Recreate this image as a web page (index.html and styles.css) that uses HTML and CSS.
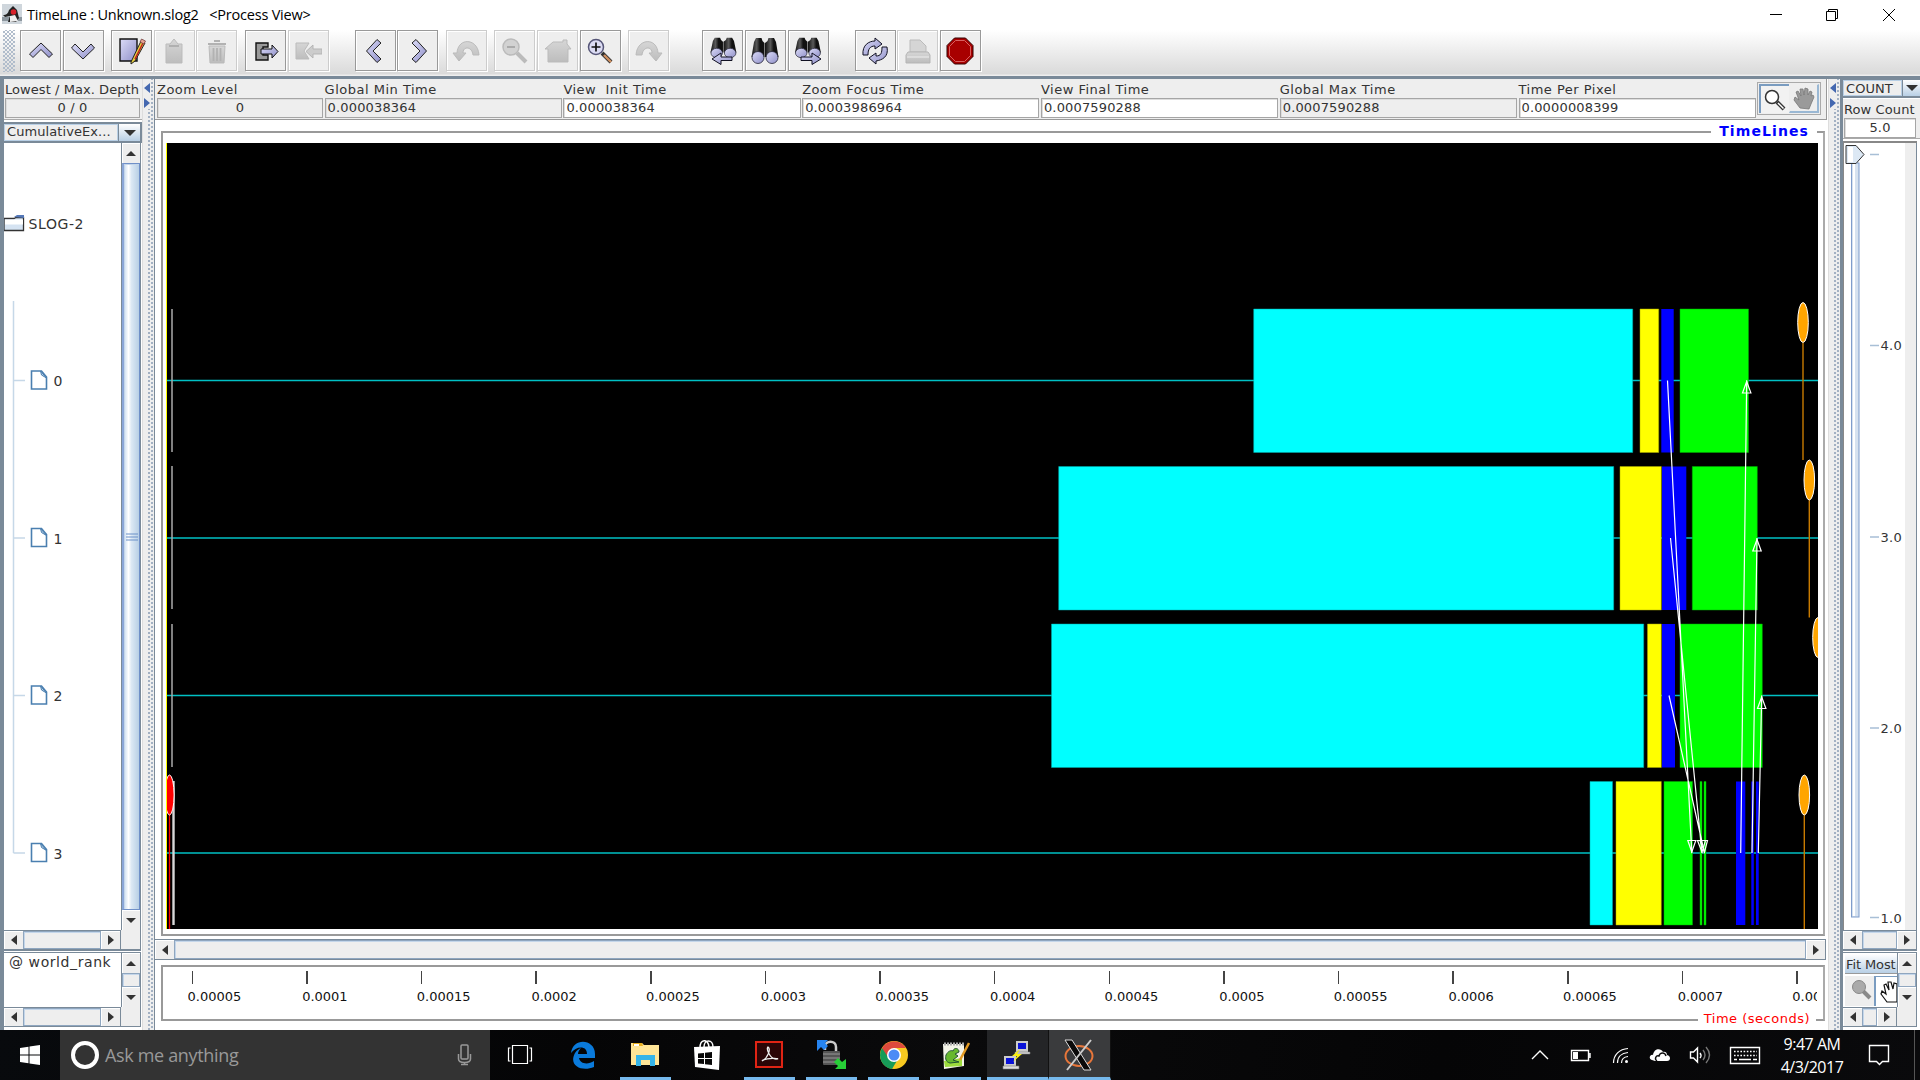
FILE: index.html
```html
<!DOCTYPE html>
<html lang="en">
<head>
<meta charset="utf-8">
<title>TimeLine : Unknown.slog2</title>
<link rel="stylesheet" href="styles.css">
</head>
<body>
<svg width="0" height="0" class="defs">
  <defs>
    <linearGradient id="lav" x1="0" y1="0" x2="1" y2="1"><stop offset="0" stop-color="#dcdcf8"/><stop offset="1" stop-color="#8f8fc8"/></linearGradient>
    <linearGradient id="gry" x1="0" y1="0" x2="0" y2="1"><stop offset="0" stop-color="#d6d6d6"/><stop offset="1" stop-color="#bdbdbd"/></linearGradient>
    <linearGradient id="barrel" x1="0" x2="1"><stop offset="0" stop-color="#111"/><stop offset=".4" stop-color="#5a5a5a"/><stop offset=".65" stop-color="#111"/></linearGradient>
    <g id="bino"><path d="M5 1h5.500l1 3 2 2v14H.500L3 5z" fill="url(#barrel)"/><path d="M17.500 1H23l2 4 2.500 15H14V6l2.500-2z" fill="url(#barrel)"/><circle cx="7" cy="20.500" r="6" fill="url(#lav)" stroke="#223" stroke-width=".8"/><circle cx="21" cy="20.500" r="6" fill="url(#lav)" stroke="#223" stroke-width=".8"/></g>
    <g id="doc"><path d="M1 1h10l5 6v12H1z" fill="#fff" stroke="#4a7fb0" stroke-width="1.600"/><path d="M10 1l6 7-5-3z" fill="#b8cfe5" stroke="#4a7fb0"/></g>
  </defs>
</svg>

<header class="titlebar">
  <svg class="app-icon" width="20" height="20" viewBox="0 0 20 20"><rect width="20" height="20" fill="#cfd6dc"/><path d="M0 13h20v4H0z" fill="#8d979f"/><path d="M1 11c3 0 5-1 6-5l4-4 4 4 2 8-3 4H6l2-6-5 1z" fill="#222"/><path d="M8 12l5-1 3 6-8 1z" fill="#eee"/><circle cx="11.500" cy="8" r="2.800" fill="#d8202a"/></svg>
  <span class="caption">TimeLine : Unknown.slog2 &nbsp;&nbsp;&lt;Process View&gt;</span>
  <svg class="winctl" width="130" height="16" viewBox="0 0 130 16" fill="none" stroke="#000"><path d="M0 8.500h12"/><path d="M56.500 5.500h9v9h-9zM58.500 5.500v-2h9v9h-2"/><path d="M113 3l12 12M125 3l-12 12"/></svg>
</header>

<nav class="toolbar">
  <i class="grip"></i>
  <button class="tb"><svg viewBox="0 0 28 28"><path d="M2.500 17L14 6l11.500 11-3.500 3.500-8-8-8 8z" fill="url(#lav)" stroke="#222"/></svg></button>
  <button class="tb"><svg viewBox="0 0 28 28"><path d="M2.500 11L14 22l11.500-11L22 7l-8 8-8-8z" fill="url(#lav)" stroke="#222"/></svg></button>
  <button class="tb g7"><svg viewBox="0 0 28 28"><path d="M2 2h17v22H2z" fill="url(#lav)" stroke="#111" stroke-width="1.400"/><path d="M13 25L23 4l4 2-10 18-4 3z" fill="#e8d040" stroke="#222"/><path d="M17 22L25 6" stroke="#c02020" stroke-width="1.500"/><path d="M22 5l1.500-3 4 2L26 7z" fill="#e8a090" stroke="#633" stroke-width=".7"/></svg></button>
  <button class="tb off"><svg viewBox="0 0 28 28"><path d="M6 7h4l4-5 4 5h4v19H6z" fill="url(#gry)" stroke="#bbb"/><path d="M9 9h10" stroke="#b0b0b0" stroke-width="2"/></svg></button>
  <button class="tb off"><svg viewBox="0 0 28 28"><path d="M6 9h16l-1 17H7z" fill="url(#gry)" stroke="#bbb"/><path d="M5 7h18M11 4h6M10.500 11v13M14 11v13M17.500 11v13" stroke="#b2b2b2" stroke-width="1.800"/></svg></button>
  <button class="tb g7"><svg viewBox="0 0 28 28"><path d="M5 6h12v4h-5v8h5v5H5z" fill="#999" stroke="#111" stroke-width="1.400"/><path d="M10 12h11V8l6 6.500-6 6.500v-4H10z" fill="url(#lav)" stroke="#111"/></svg></button>
  <button class="tb off"><svg viewBox="0 0 28 28"><path d="M2 6h13l-5 8 5 8H2z" fill="url(#gry)" stroke="#bbb"/><path d="M28 12h-9V8l-7 6.500 7 6.500v-4h9z" fill="#ccc" stroke="#b5b5b5"/></svg></button>
  <button class="tb g26"><svg viewBox="0 0 28 28"><path d="M16 2.500L5.500 14 16 25.500l4-3.500-8-8 8-8z" fill="url(#lav)" stroke="#222"/></svg></button>
  <button class="tb"><svg viewBox="0 0 28 28"><path d="M12 2.500L22.500 14 12 25.500 8 22l8-8-8-8z" fill="url(#lav)" stroke="#222"/></svg></button>
  <button class="tb off g7"><svg viewBox="0 0 28 28"><path d="M1 16l6 8 7-8h-3c0-7 9-7 10 2h6C26 1 6 0 5 16z" fill="url(#gry)" stroke="#bbb"/></svg></button>
  <button class="tb off g7"><svg viewBox="0 0 28 28"><path d="M16 16l9 9" stroke="#bbb" stroke-width="4"/><circle cx="10" cy="10" r="8" fill="#d2d2d2" stroke="#bbb" stroke-width="1.500"/><path d="M6 10h8" stroke="#aaa" stroke-width="2"/></svg></button>
  <button class="tb off"><svg viewBox="0 0 28 28"><path d="M1 12L9 5h10V3h4v4l4 5h-3v13H4V12z" fill="url(#gry)" stroke="#bbb"/></svg></button>
  <button class="tb"><svg viewBox="0 0 28 28"><path d="M16 16l9 9" stroke="#333" stroke-width="4"/><path d="M18 18l7 7" stroke="#d09060" stroke-width="2.400"/><circle cx="10" cy="10" r="7.500" fill="#dcdcf4" stroke="#555577" stroke-width="1.500"/><path d="M5.500 10h9M10 5.500v9" stroke="#111" stroke-width="1.700"/></svg></button>
  <button class="tb off g7"><svg viewBox="0 0 28 28"><path d="M27 16l-6 8-7-8h3c0-7-9-7-10 2H1C2 1 22 0 23 16z" fill="url(#gry)" stroke="#bbb"/></svg></button>
  <button class="tb g33"><svg viewBox="0 0 28 28"><use href="#bino" transform="translate(1 0) scale(.96 .78)"/><path d="M23 20H12v-4l-9 6 9 5.500v-4h11z" fill="url(#lav)" stroke="#112"/></svg></button>
  <button class="tb"><svg viewBox="0 0 28 28"><use href="#bino"/></svg></button>
  <button class="tb"><svg viewBox="0 0 28 28"><use href="#bino" transform="translate(.5 0) scale(.96 .78)"/><path d="M7 20h11v-4l9 6-9 5.500v-4H7z" fill="url(#lav)" stroke="#112"/></svg></button>
  <button class="tb g26"><svg viewBox="0 0 28 28" fill="url(#lav)" stroke="#112"><path d="M2 18C1 8 8 4 14 4V1l7 6-7 5V9c-5 0-7 3-7 9z"/><path d="M26 10c2 10-5 13-11 14v3l-7-6 7-5v3c5 0 6-3 6-9z"/></svg></button>
  <button class="tb off"><svg viewBox="0 0 28 28"><path d="M6 15V3h10l6 6v6z" fill="#d5d5d5" stroke="#bbb"/><path d="M4 15h20l2 3v8H2v-8z" fill="url(#gry)" stroke="#b5b5b5"/><path d="M3 20h22" stroke="#eee"/></svg></button>
  <button class="tb"><svg viewBox="0 0 28 28"><path d="M8.500 1h11L27 8.500v11L19.500 27h-11L1 19.500v-11z" fill="#a80000" stroke="#300"/><path d="M9.500 3.500h9l6 6v9l-6 6h-9l-6-6v-9z" fill="none" stroke="#d86060"/></svg></button>
</nav>

<main class="work">
  <aside class="left">
    <section class="depth"><label>Lowest / Max. Depth</label><output class="ro mid">0 / 0</output></section>
    <div class="combo"><span>CumulativeEx...</span><b><i class="ar dn big"></i></b></div>
    <section class="pane tree-pane">
      <div class="tree">
        <svg width="118" height="787" viewBox="4 143 118 787">
          <path d="M13.500 301v552M13.500 380.500H25M13.500 538H25M13.500 695.500H25M13.500 853H25" stroke="#c6d8e8" stroke-width="1.500" fill="none"/>
          <path d="M4 218.500h10l2-1h7.500v13H4z" fill="#d5e3f2" stroke="#333" stroke-width="1.300"/><path d="M5 219.500h18v5H5z" fill="#fff"/><path d="M14 217l3-2h7v3z" fill="#5478b8"/>
          <use href="#doc" x="30.500" y="370"/><use href="#doc" x="30.500" y="527.500"/><use href="#doc" x="30.500" y="685"/><use href="#doc" x="30.500" y="842.500"/>
          <g class="tree-text"><text x="28.500" y="229">SLOG-2</text><text x="53.500" y="386">0</text><text x="53.500" y="543.500">1</text><text x="53.500" y="701">2</text><text x="53.500" y="858.500">3</text></g>
        </svg>
      </div>
      <div class="vs"><b><i class="ar up"></i></b><em class="thumb"><svg width="12" height="8"><path d="M0 1h12M0 4h12M0 7h12" stroke="#6a90c8"/></svg></em><b><i class="ar dn"></i></b></div>
      <div class="hs"><b><i class="ar lf"></i></b><em></em><b><i class="ar rt"></i></b></div>
      <span class="corner"></span>
    </section>
    <section class="pane rank-pane">
      <div class="rank">@ world_rank</div>
      <div class="vs"><b><i class="ar up"></i></b><em></em><b><i class="ar dn"></i></b></div>
      <div class="hs"><b><i class="ar lf"></i></b><em></em><b><i class="ar rt"></i></b></div>
      <span class="corner"></span>
    </section>
  </aside>

  <div class="split"><svg width="6" height="30"><path d="M6 4v10L0 9zM0 19v10l6-5z" fill="#4468b0"/></svg></div>

  <section class="center">
    <div class="times">
      <div class="f f0"><label>Zoom Level</label><output class="ro mid">0</output></div>
      <div class="f"><label>Global Min Time</label><output class="ro">0.000038364</output></div>
      <div class="f"><label>View &nbsp;Init Time</label><output>0.000038364</output></div>
      <div class="f"><label>Zoom Focus Time</label><output>0.0003986964</output></div>
      <div class="f"><label>View Final Time</label><output>0.0007590288</output></div>
      <div class="f"><label>Global Max Time</label><output class="ro">0.0007590288</output></div>
      <div class="f"><label>Time Per Pixel</label><output>0.0000008399</output></div>
      <div class="modes">
        <b class="sel"><svg width="24" height="24" viewBox="0 0 24 24"><path d="M14 14l7 7" stroke="#333" stroke-width="4"/><path d="M15 15l5.500 5.500" stroke="#fff" stroke-width="1.500"/><circle cx="9" cy="9" r="6.500" fill="#fff" stroke="#333" stroke-width="1.500"/></svg></b>
        <b><svg width="24" height="24" viewBox="0 0 24 24"><path d="M8 22L2 14l1-3 4 3L4 6l2-1 3 5-1-7h3l1 6 1-7 3 1v6l2-4 2 1-1 4 2-1 1 2-3 7-2 5z" fill="#9a9a9a" stroke="#777" stroke-width=".8"/></svg></b>
      </div>
    </div>
    <fieldset class="lines"><legend>TimeLines</legend>
      <svg class="canvas" width="1652" height="786" viewBox="166 143 1652 786">
        <rect x="166" y="143" width="1652" height="786" fill="#000"/>
        <path d="M166 380.500h1652M166 538h1652M166 695.500h1652M166 853h1652" stroke="#00c0c4" stroke-width="1.300"/>
        <path d="M172 309v143M172 466v143M172 624v143" stroke="#aaa" stroke-width="1.500"/>
        <path d="M173.500 781v144" stroke="#d8d8d8" stroke-width="2.400"/>
        <g fill="#0ff" stroke="#0aa" stroke-width=".5"><path d="M1253.700 309h379v143.500h-379zM1058.700 466.500h555v143.500h-555zM1051.500 624h592.200v143.500h-592.200zM1590 781.500h22.500v143.500H1590z"/></g>
        <g fill="#ff0" stroke="#aa0" stroke-width=".5"><path d="M1640 309h18.700v143.500H1640zM1620 466.500h41.300v143.500H1620zM1647.500 624h13.800v143.500h-13.800zM1616 781.500h45.300v143.500H1616z"/></g>
        <g fill="#00f"><path d="M1661.300 309h12.400v143.500h-12.400zM1662 466.500h24.300v143.500H1662zM1662 624h13v143.500h-13zM1736 781.500h9.300v143.500H1736zM1751.300 781.500h2.500v143.500h-2.500zM1756 781.500h2.700v143.500H1756z"/></g>
        <g fill="#0f0" stroke="#0a0" stroke-width=".5"><path d="M1680 309h68.500v143.500H1680zM1692.300 466.500h65v143.500h-65zM1680 624h82.300v143.500H1680zM1664 781.500h28.500v143.500H1664zM1700 781.500h2v143.500h-2zM1704 781.500h2v143.500h-2z"/></g>
        <g stroke="#c87a00" stroke-width="1.400"><path d="M1803 343v117M1809.300 500v117.500M1804.300 815v114"/></g>
        <g fill="#ffa500" stroke="#fff" stroke-width="1"><ellipse cx="1803" cy="322.500" rx="5.300" ry="20"/><ellipse cx="1809.300" cy="480" rx="5.300" ry="20"/><ellipse cx="1818" cy="637.500" rx="5.300" ry="20"/><ellipse cx="1804.300" cy="795" rx="5.300" ry="20"/></g>
        <path d="M169.500 815v114" stroke="#f00" stroke-width="1.300"/><ellipse cx="169.500" cy="795" rx="4.600" ry="20" fill="#f00" stroke="#fff"/>
        <g stroke="#fff" stroke-width="1.200" fill="none">
          <path d="M1667.500 380.500L1691.800 853M1670.500 538L1702 853M1669 695.500L1704.500 853M1740.700 853L1746.700 380.500M1752 853L1757 538M1758.300 853L1761.700 695.500"/>
          <path d="M1746.700 381.500l-4.200 11.500h8.400zM1757 539.500l-4.200 11.500h8.400zM1761.700 697l-4.200 11.500h8.400zM1691.800 852l-4-11.500h8zM1702 852l-4.500-11.500h8zM1704.500 852l-4.500-11.500h7.500z"/>
        </g>
        <path d="M166.500 143v786" stroke="#ff0"/>
      </svg>
    </fieldset>
    <div class="hs wide"><b><i class="ar lf"></i></b><em></em><b><i class="ar rt"></i></b></div>
    <div class="ruler">
      <div class="ticks"><span>0.00005</span><span>0.0001</span><span>0.00015</span><span>0.0002</span><span>0.00025</span><span>0.0003</span><span>0.00035</span><span>0.0004</span><span>0.00045</span><span>0.0005</span><span>0.00055</span><span>0.0006</span><span>0.00065</span><span>0.0007</span><span>0.00075</span></div>
      <div class="unit">Time (seconds)</div>
    </div>
  </section>

  <div class="split right-split"><svg width="6" height="30"><path d="M6 4v10L0 9zM0 19v10l6-5z" fill="#4468b0"/></svg></div>

  <aside class="right">
    <div class="combo"><span>COUNT</span><b><i class="ar dn big"></i></b></div>
    <section class="rowcount"><label>Row Count</label><output class="mid">5.0</output></section>
    <section class="slider-pane">
      <div class="slider">
        <svg width="61" height="787" viewBox="1844 143 61 787">
          <rect x="1851.500" y="163" width="7.500" height="754" fill="#d6e2f0" stroke="#7f9ccb"/><path d="M1854 163v753" stroke="#fff" stroke-width="2"/>
          <path d="M1846 145.500h10l8 9-8 9h-10z" fill="#dce8f4" stroke="#333"/><path d="M1848 147h5v15h-5z" fill="#fff"/>
          <path d="M1870 154.500h9M1870 345.500h9M1870 537h9M1870 728h9M1870 917.500h9" stroke="#a8bfd6" stroke-width="1.300"/>
          <g class="num"><text x="1880.500" y="350">4.0</text><text x="1880.500" y="541.500">3.0</text><text x="1880.500" y="732.500">2.0</text><text x="1880.500" y="922.500">1.0</text></g>
        </svg>
      </div>
      <div class="hs"><b><i class="ar lf"></i></b><em></em><b><i class="ar rt"></i></b></div>
    </section>
    <section class="pane fit-pane">
      <div class="fit"><div class="fitbtn">Fit Most</div>
        <div class="fitmodes"><b><svg width="24" height="24" viewBox="0 0 24 24"><path d="M13 13l7 7" stroke="#8a8a8a" stroke-width="4"/><circle cx="9" cy="9" r="6.500" fill="#aaa" stroke="#888"/></svg></b><b class="sel"><svg width="19" height="24" viewBox="0 0 19 24"><path d="M8 23L2 15l1-3 4 3-2-9 2-1 3 6-1-8h3l2 7 1-6 3 1v18z" fill="#fff" stroke="#111" stroke-width="1.200"/></svg></b></div></div>
      <div class="vs"><b><i class="ar up"></i></b><em></em><b><i class="ar dn"></i></b></div>
      <div class="hs"><b><i class="ar lf"></i></b><em></em><b><i class="ar rt"></i></b></div>
      <span class="corner"></span>
    </section>
  </aside>
</main>

<footer class="taskbar">
  <div class="start"><svg width="20" height="20" viewBox="0 0 20 20" fill="#fff"><path d="M0 3l8.500-1.300v7.800H0zM9.500 1.500L20 0v9.500H9.500zM0 10.500h8.500v7.800L0 17zM9.500 10.500H20V20L9.500 18.500z"/></svg></div>
  <div class="search"><i class="ring"></i><span>Ask me anything</span><svg width="16" height="22" viewBox="0 0 16 22" fill="none" stroke="#999" stroke-width="1.500"><rect x="4" y="1" width="7" height="14" rx="1"/><path d="M1.500 10v5c0 2 2 3.500 6 3.500s6-1.500 6-3.500v-5M7.500 18v3M4 20.500h7"/></svg></div>
  <div class="apps">
    <div class="app view"><svg width="26" height="24" viewBox="0 0 26 24" fill="none" stroke="#fff" stroke-width="1.200"><path d="M5.500 2.500h15v18h-15zM3.500 5H1.500v13h2M22.500 5h2v13h-2"/></svg></div>
    <div class="app"><svg width="26" height="28" viewBox="0 0 26 28"><path d="M1 12C3-4 25-2 25 13v4H9c1 6 9 7 15 3v6C12 31-2 25 5 12c2-3 4-4 6-5-2 2-3 4-3 6h9c0-9-11-8-16-1z" fill="#0a7adb"/></svg></div>
    <div class="app run"><svg width="29" height="26" viewBox="0 0 29 26"><path d="M0 1h11l2 2h15v20H0z" fill="#ffe597"/><path d="M2 1h9l1 3H2z" fill="#e8b020"/><path d="M3 2h5v2H3z" fill="#fff"/><path d="M5 13h19v11h-5v-6h-9v6H5z" fill="#35b4e8"/></svg></div>
    <div class="app"><svg width="28" height="30" viewBox="0 0 28 30"><path d="M7 8c0-9 8-10 9-1M11 7c0-8 9-8 9 0" stroke="#fff" stroke-width="1.500" fill="none"/><path d="M1 7l26-1-1 24L2 27z" fill="#fff"/><path d="M5 13.500l6-.6v5H5zM12 12.800l7-.8v6h-7zM5 19h6v5l-6-.6zM12 19h7v6l-7-.8z" fill="#080808"/></svg></div>
    <div class="app run"><svg width="28" height="27" viewBox="0 0 28 27"><rect x="1" y="1" width="26" height="25" fill="#2a0506" stroke="#e02414" stroke-width="2"/><path d="M7 20c6-3 9-12 6-14-2 2 2 12 8 12s-6-2-13 1z" fill="none" stroke="#eee" stroke-width="1.300"/></svg></div>
    <div class="app run"><svg width="30" height="29" viewBox="0 0 30 29"><path d="M8 10V7c0-7 11-7 11 0v4" fill="none" stroke="#ccc" stroke-width="2.500"/><rect x="6" y="11" width="17" height="14" rx="1" fill="#555"/><path d="M6 14h17M6 18h17M6 22h17" stroke="#999"/><path d="M0 0h11l-3 3 3 3-4 4-3-3-4 4z" fill="#2684f0"/><path d="M29 29H18l3-3-4-4 4-4 4 4 4-3z" fill="#27cf37"/></svg></div>
    <div class="app run"><svg width="28" height="28" viewBox="0 0 28 28"><circle cx="14" cy="14" r="14" fill="#f7c920"/><path d="M14 14L2 7a14 14 0 0 0 10 21l6-10z" fill="#179c58"/><path d="M14 7h12A14 14 0 0 0 2 7l6 9z" fill="#de4a3d"/><circle cx="14" cy="14" r="7" fill="#fff"/><circle cx="14" cy="14" r="5.500" fill="#4c8bf5"/></svg></div>
    <div class="app run"><svg width="28" height="28" viewBox="0 0 28 28"><path d="M1 3h21v22l-20 3z" fill="#f4f4e8"/><path d="M2 3h20" stroke="#aaa" stroke-width="3" stroke-dasharray="2 1"/><path d="M2 20l18-3v8L3 26z" fill="#9cdc3c"/><path d="M4 14c2-4 5-5 7-4 1-4 6-3 6 1l-4 2 3 2-5 4 6 2-9 1c-4-1-5-4-4-8z" fill="#67b82e" stroke="#253"/><path d="M18 19L27 2" stroke="#e39a22" stroke-width="2.500"/></svg></div>
    <div class="app run lit"><svg width="30" height="30" viewBox="0 0 30 30"><path d="M14 1h12v11H14zM2 16h12v10H2z" fill="#ccc"/><path d="M16 3h8v6h-8zM4 18h8v6H4z" fill="#0a12d8"/><path d="M13 12h15v2H13zM1 26h16v3H1z" fill="#ddd" stroke="#777" stroke-width=".6"/><path d="M18 9l-8 7h5l-4 6 9-8h-5z" fill="#f8ee10"/></svg></div>
    <div class="app run lit2"><svg width="32" height="32" viewBox="0 0 32 32"><ellipse cx="16" cy="17" rx="13.500" ry="10" fill="none" stroke="#e8763a" stroke-width="2"/><path d="M2 1h7l19 30h-7z" fill="#0a0a0a" stroke="#ddd"/><path d="M28 1L4 31" stroke="#ccc" stroke-width="2"/></svg></div>
  </div>
  <div class="tray">
    <svg width="370" height="34" viewBox="1525 1038 370 34" fill="none" stroke="#fff" stroke-width="1.400">
      <path d="M1532 1059l8-8 8 8"/><path d="M1571.500 1050.500h17v10h-17zM1590 1053v5"/><path d="M1573 1052h5v7h-5z" fill="#fff" stroke="none"/>
      <path d="M1613.500 1063c0-8 6-14 14.500-14.500M1617.500 1063c0-6 4-10 10.500-10.500M1621.500 1063c0-4 2-6 6.500-6.500" stroke-width="1.200"/><circle cx="1626.500" cy="1061.500" r="1.500" fill="#fff" stroke="none"/>
      <path d="M1652 1060c-4-1-2-6 1-5 1-7 8-7 10-3 4-1 4 3 4 3 4 1 4 6 0 6h-12z" fill="#fff" stroke="none"/><path d="M1657 1061c-3-2-1-6 2-5 1-4 6-4 7 0" stroke="#111"/>
      <path d="M1690.500 1052h3l4-4v14l-4-4h-3z"/><path d="M1700 1053q2 2.500 0 5"/><path d="M1703 1050q4 5 0 10M1706 1047q7 8 0 16" stroke="#777"/>
      <path d="M1730.500 1047.500h29v16h-29z"/><path d="M1734 1051.500h23M1734 1055.500h23" stroke-dasharray="1.600 1.600"/><path d="M1734 1059.500h3M1739 1059.500h12M1753 1059.500h4"/>
      <path d="M1869.500 1045.500h19v16h-6l-3 3-3-3h-7z"/>
      <g class="clock"><text x="1812" y="1049.500">9:47 AM</text><text x="1812" y="1072.500">4/3/2017</text></g>
    </svg>
    <i class="peek"></i>
  </div>
</footer>
</body>
</html>
```
FILE: styles.css
```css
* { box-sizing: border-box; }
body { margin: 0; width: 1920px; height: 1080px; overflow: hidden; background: #fff; display: flex; flex-direction: column;
  font: 13px/15px "DejaVu Sans", sans-serif; color: #333; }
b, em, i { font-style: normal; font-weight: normal; display: block; }
svg { display: block; flex: none; }
.defs { height: 0; }

.titlebar { height: 30px; flex: none; display: flex; align-items: center; padding: 0 30px 2px 2px; }
.caption { font: 14.500px "Open Sans", sans-serif; color: #000; margin-left: 5px; letter-spacing: -.22px; }
.titlebar .winctl { margin-left: auto; margin-right: -10px; }

.toolbar { height: 46px; flex: none; display: flex; align-items: flex-start; padding-left: 3px; background: linear-gradient(#fff, #dadada 44px, #eee 45px); }
.grip { width: 12px; height: 42px; margin-right: 5px; background: radial-gradient(circle at 1px 1px, #b0bccb 1px, transparent 1.200px) 0 1px/4px 4px, radial-gradient(circle at 1px 1px, #b0bccb 1px, transparent 1.200px) 2px 3px/4px 4px; }
.tb { width: 41px; height: 41px; margin: 0 1.600px 0 0; padding: 0; border: 1px solid #999; box-shadow: inset 1px 1px #fff, 1px 1px #fff; background: #eee; display: grid; place-items: center; flex: none; }
.tb svg { width: 28px; height: 28px; }
.tb.off { border-color: #ccc; }
.g7 { margin-left: 6px; }
.g26 { margin-left: 24.500px; }
.g33 { margin-left: 31.500px; }

.work { height: 954px; flex: none; display: flex; border-top: 3px solid #7a8a99; background: #fff; }
label { display: block; white-space: nowrap; }
output { display: block; height: 20px; border: 1px solid #a5a5a5; box-shadow: inset 1px 1px #ddd; background: #fff; padding: 1px 2px 0; letter-spacing: .15px; }
.ro { background: #eee; }
.mid { text-align: center; }

.left { width: 142px; border-left: 4px solid #7a8a99; display: flex; flex-direction: column; flex: none; }
.depth { height: 41px; background: #eee; padding: 3px 2px 0 1px; border-bottom: 1px solid #aaa; }
.depth label { height: 16px; letter-spacing: .06px; }
.combo { height: 21px; margin-top: 2px; display: flex; border: 2px solid #7a8a99; border-left: 0; background: #eee; flex: none; }
.combo span { flex: 1; padding: 0 0 0 2px; border: 1px solid #b8cfe5; white-space: nowrap; line-height: 14px; letter-spacing: .08px; }
.combo b { width: 22px; border-left: 1px solid #7a8a99; background: linear-gradient(#fff, #b8cfe5); display: grid; place-items: center; flex: none; }

.ar { width: 0; height: 0; border: 5px solid transparent; }
.up { border-top: 0; border-bottom-color: #333; }
.dn { border-bottom: 0; border-top-color: #333; }
.lf { border-left: 0; border-right: 6px solid #333; }
.rt { border-right: 0; border-left: 6px solid #333; }
.dn.big { border-width: 6px 6px 0; }

.pane { display: grid; grid-template-columns: 1fr 20px; grid-template-rows: 1fr 20px; }
.left .pane { margin-right: 1px; }
.tree-pane { height: 808px; flex: none; border-bottom: 1px solid #7a8a99; }
.tree, .rank, .slider { overflow: hidden; background: #fff; }
.tree-text { font-size: 14px; fill: #333; letter-spacing: .6px; }
.vs { display: flex; flex-direction: column; border-left: 1px solid #7a8a99; border-right: 1px solid #7a8a99; background: #eee; }
.vs b { height: 20px; display: grid; place-items: center; box-shadow: inset 1px 1px #fff; flex: none; }
.vs em, .hs em { flex: 1; border: 1px solid #8fa6bf; box-shadow: inset 1px 1px #c4d6ea; background: #eee; }
.vs .thumb { background: linear-gradient(90deg, #c9dcf0, #fff 30%, #dce8f4 50%, #b8cfe5); border-color: #7090c8; border-left: 2px solid #8aa6d8; display: grid; place-items: center; }
.hs { display: flex; border: 1px solid #7a8a99; border-left: 0; background: #eee; height: 20px; }
.hs b { width: 19px; display: grid; place-items: center; box-shadow: inset 1px 1px #fff; flex: none; }
.corner { background: #eee; border-right: 1px solid #7a8a99; border-bottom: 1px solid #7a8a99; }
.rank-pane { height: 75px; margin-top: 1px; border-top: 1px solid #7a8a99; }
.rank { font-size: 14px; padding: 2px 0 0 5px; white-space: nowrap; letter-spacing: .58px; }

.split { width: 13px; flex: none; border-right: 1px solid #7a8a99; border-left: 1px solid #ddd; background: radial-gradient(circle at 1px 1px, #a3b1c3 1px, transparent 1.200px) 5px 1px/5px 4px repeat-y, radial-gradient(circle at 1px 1px, #a3b1c3 1px, transparent 1.200px) 8px 3px/5px 4px repeat-y, #eee; }
.split svg { margin-left: 1px; background: #eee; }
.right-split { margin-left: auto; }

.center { width: 1672px; flex: none; display: flex; flex-direction: column; }
.times { height: 41px; display: flex; background: #eee; border-right: 1px solid #999; border-bottom: 1px solid #999; padding-left: 2px; flex: none; }
.f { width: 237.200px; margin-right: 1.600px; padding-top: 3px; flex: none; }
.f0 { width: 166px; }
.f label { height: 16px; letter-spacing: .5px; padding-left: 0; }
.modes { display: flex; width: 64px; height: 33px; margin: 3px 0 0; padding: 1px; border: 1px solid #aaa; flex: none; }
.modes b { flex: 1; display: grid; place-items: center; border: 1px solid #eee; border-right: 2px solid #9ab8d4; border-bottom: 2px solid #9ab8d4; }
.modes .sel { border: 2px solid #7a9cc0; border-right: 0; border-bottom: 0; background: #f2f2f2; }
.lines { height: 812px; width: 1664px; margin: 4px 0 0 6px; padding: 0; min-width: 0; border: 2px solid #999; border-right-color: #aaa; flex: none; }
.lines legend { margin-left: auto; margin-right: 6px; padding: 0 8px; line-height: 15px; color: #00f; font-weight: bold; font-size: 14px; letter-spacing: 1.100px; }
.canvas { margin: 4px 0 0 3px; }
.wide { width: 1671px; height: 21px; margin-top: 3px; flex: none; }
.ruler { width: 1664px; height: 56px; margin: 5px 0 0 6px; border: 2px solid #999; border-right-color: #aaa; flex: none; display: flex; flex-direction: column; align-items: flex-end; }
.ticks { display: grid; grid-template-columns: repeat(15, 114.640px); align-self: flex-start; margin-left: 24.500px; padding-top: 4px; width: 1629px; height: 44px; overflow: hidden; color: #111; flex: none; }
.ticks span::before { content: ""; display: block; width: 1.500px; height: 13px; margin: 0 0 5px 4px; background: #444; }
.unit { margin-right: 7px; padding: 0 6px; background: #fff; color: #f00; letter-spacing: .5px; flex: none; }

.right { width: 79px; overflow: hidden; border-left: 2px solid #7a8a99; display: flex; flex-direction: column; flex: none; }
.right .combo { margin-top: -1px; height: 20px; border-right: 0; }
.right .combo span { padding-top: 1px; line-height: 13px; }
.right .combo b { width: 18px; }
.rowcount { height: 40px; margin-top: 1px; padding: 3px 4px 0 1px; background: #eee; border-bottom: 1px solid #aaa; flex: none; }
.rowcount label { height: 16px; letter-spacing: .1px; }
.slider-pane { height: 810px; margin-top: 2px; flex: none; border-top: 2px solid #888; border-bottom: 1px solid #7a8a99; display: flex; flex-direction: column; width: 74px; }
.slider { flex: 1; background: #eee; border-left: 1px solid #888; border-right: 1px solid #7a8a99; }
.slider svg { background: #fff; }
.num { fill: #333; letter-spacing: .3px; }
.fit-pane { width: 74px; height: 75px; border-top: 1px solid #7a8a99; margin-top: 1px; flex: none; }
.fit { overflow: hidden; padding: 1px 0 0 2px; min-width: 0; }
.fitbtn { height: 20px; padding: 3px 0 0 1px; white-space: nowrap; background: linear-gradient(#fff, #b8cfe5); border-bottom: 1px solid #999; letter-spacing: -.1px; }
.fitmodes { display: flex; margin-top: 2px; }
.fitmodes b { width: 31px; height: 30px; flex: none; padding: 2px 2px 2px 5px; background: #eee; border-right: 2px solid #7a9cc0; }
.fitmodes .sel { background: #fff; border: 0; border-top: 1px solid #7a9cc0; padding-left: 3px; }

.taskbar { height: 50px; flex: none; display: flex; align-items: stretch; background: linear-gradient(100deg, #080a0d, #050506 30%, #0a0a0b 50%, #050506 75%, #0a0a0c); color: #fff; }
.start { width: 60px; display: grid; place-items: center; }
.search { width: 430px; background: #333; display: flex; align-items: center; padding: 0 17px 0 11px; }
.ring { width: 28px; height: 28px; border: 4px solid #fff; border-radius: 50%; }
.search span { font: 18px "Open Sans", sans-serif; letter-spacing: -.34px; color: #999; margin-left: 6px; flex: 1; }
.apps { display: flex; }
.app { width: 62.100px; display: grid; place-items: center; border-bottom: 3px solid transparent; padding-top: 2px; }
.app.view { padding-right: 2px; }
.app.run { background: linear-gradient(#76b9ed, #76b9ed) center 47px/51px 3px no-repeat border-box; }
.app.lit, .app.lit2 { background: linear-gradient(#76b9ed, #76b9ed) center 47px/62px 3px no-repeat border-box, #242527; border-right: 1px solid #111; }
.app.lit2 { background-color: #3a3b3d; }
.tray { margin-left: auto; display: flex; align-items: center; }
.tray svg { overflow: visible; }
.clock { font: 16px "Open Sans", sans-serif; text-anchor: middle; fill: #fff; stroke: none; letter-spacing: -.5px; }
.peek { width: 6px; height: 50px; margin-left: 19px; border-left: 1px solid #555; }
```
